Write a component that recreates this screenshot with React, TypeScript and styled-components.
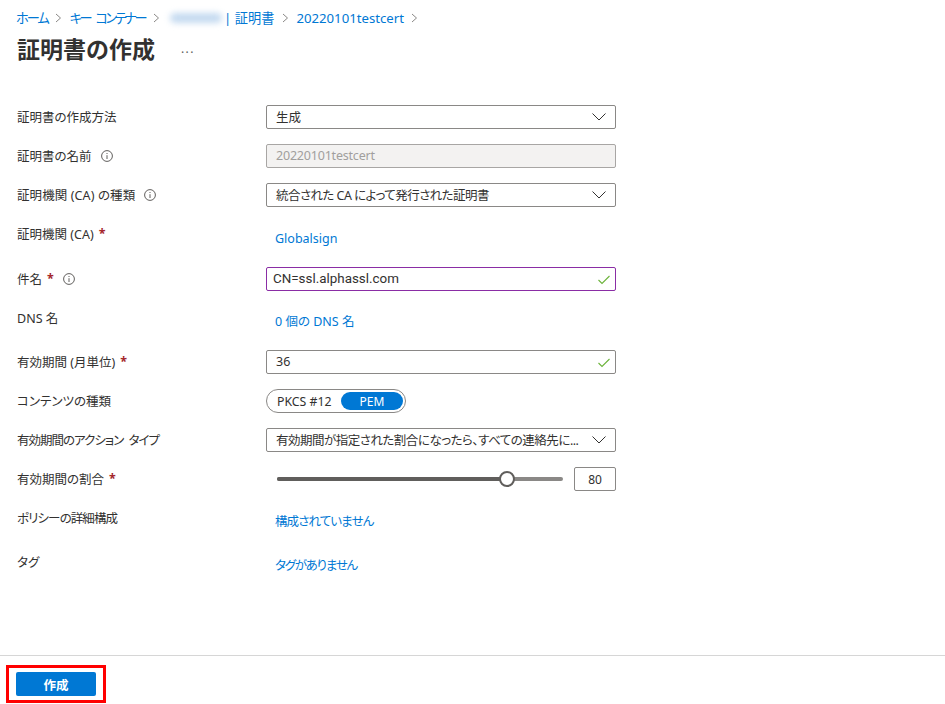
import React from "react";
import styled, { createGlobalStyle } from "styled-components";

const Global = createGlobalStyle`
  html, body { margin: 0; padding: 0; background: #fff; overflow: hidden; }
  body { font-family: "Noto Sans", "Noto Sans CJK JP", sans-serif; color: #323130; font-feature-settings: "palt" 1; }
`;
const JP = `"Noto Sans", "Noto Sans CJK JP", sans-serif`;

const Page = styled.div`
  height: 704px; display: flex; flex-direction: column; font-family: ${JP};
`;
const Header = styled.header`padding: 8px 16px 0 16px;`;
const Breadcrumb = styled.nav`
  display: flex; align-items: center; height: 19px; font-size: 13.2px; color: #0078d4;
`;
const Crumb = styled.a<{ $track?: number }>`
  color: #0078d4; white-space: nowrap; letter-spacing: ${p => p.$track ?? 0}px; word-spacing: ${p => (p.$track ? 4 : 0)}px;
`;
const Sep = styled.span`display: inline-flex; width: 22px; justify-content: center; color: #8a8886;`;
const Blurred = styled.span`
  display: inline-block; width: 52px; height: 10px; margin: 0 2px 0 3px;
  background: #c4daf0; border-radius: 5px; filter: blur(3px);
`;
const TitleRow = styled.div`display: flex; align-items: center; margin-top: 3px; height: 38px;`;
const Title = styled.h1`
  margin: 0; font-size: 23px; font-weight: 700; color: #323130; line-height: 38px; margin-left: 1px;
  font-feature-settings: normal;
`;
const More = styled.span`margin-left: 26px; font-size: 12px; color: #605e5c; letter-spacing: 1.4px; position: relative; top: -1px;`;

const Form = styled.main`
  margin-top: 37px; padding-left: 17px; display: flex; flex-direction: column; gap: 15px;
`;
const Row = styled.div<{ $h?: number }>`
  display: grid; grid-template-columns: 249px 350px; height: ${p => p.$h ?? 24}px;
`;
const Label = styled.label<{ $track?: number; $word?: number }>`
  font-size: 12.5px; color: #323130; display: flex; align-items: center; height: 22px; white-space: pre;
  letter-spacing: ${p => p.$track ?? 0}px; word-spacing: ${p => p.$word ?? 0}px;
`;
const Star = styled.span`color: #a4262c; margin-left: 5px; font-weight: 700;`;
const InfoWrap = styled.span`display: inline-flex; margin-left: 9px; margin-top: 2px; color: #605e5c;`;
const Box = styled.div<{ $disabled?: boolean; $focus?: boolean; $track?: number }>`
  box-sizing: border-box; width: 350px; height: 24px; display: flex; align-items: center;
  justify-content: space-between; padding: 0 8px 1px 9px; border-radius: 2px; font-size: 12.5px;
  color: ${p => (p.$disabled ? "#a19f9d" : "#323130")};
  background: ${p => (p.$disabled ? "#f3f2f1" : "#fff")};
  border: 1px solid ${p => (p.$focus ? "#8a2da5" : p.$disabled ? "#a8a6a4" : "#8a8886")};
  white-space: nowrap;
  letter-spacing: ${p => p.$track ?? 0}px;
`;
const BigText = styled.span`font-family: Roboto, sans-serif; font-size: 13.4px; color: #323130; margin-left: -3px;`;
const LinkCell = styled.a<{ $pt?: number; $track?: number }>`
  font-size: 12.5px; color: #0078d4; padding: ${p => p.$pt ?? 6}px 0 0 9px; line-height: 20px; display: block;
  letter-spacing: ${p => p.$track ?? 0}px;
`;
const Toggle = styled.div`
  box-sizing: border-box; width: 140px; height: 24px; border: 1px solid #8a8886; border-radius: 12px;
  display: flex; align-items: center; padding: 0 2px 0 10px; font-size: 12.3px; justify-content: space-between;
`;
const ToggleOn = styled.span`
  width: 62px; height: 18px; border-radius: 9px; background: #0078d4; color: #fff;
  display: flex; align-items: center; justify-content: center; font-size: 12px;
`;
const SliderRow = styled.div`display: flex; align-items: center; justify-content: space-between; height: 24px;`;
const Track = styled.div`
  position: relative; width: 286px; height: 4px; margin-left: 11px; border-radius: 2px; background: #8a8886;
`;
const Fill = styled.div`height: 4px; border-radius: 2px; background: #605e5c;`;
const Thumb = styled.div`
  position: absolute; top: -6px; width: 16px; height: 16px; box-sizing: border-box; margin-left: -8px;
  border: 2px solid #605e5c; border-radius: 50%; background: #fff;
`;
const NumBox = styled.div`
  box-sizing: border-box; width: 42px; height: 24px; border: 1px solid #8a8886; border-radius: 2px;
  font-size: 12px; display: flex; align-items: center; justify-content: center;
`;
const Footer = styled.footer`
  margin-top: auto; border-top: 1px solid #d6d6d6; padding: 9px 6px 1px;
`;
const Highlight = styled.div`
  display: inline-block; box-sizing: border-box; border: 3px solid #f00; padding: 4px 7px; height: 38px; width: 100px;
`;
const Primary = styled.button`
  display: block; width: 80px; height: 24px; border: 0; border-radius: 2px; padding: 0;
  background: #0078d4; color: #fff; font: 700 12.5px ${JP};
`;

const Chevron = () => (
  <svg width="16" height="10" viewBox="0 0 16 10" fill="none" stroke="#323130" strokeWidth="1" style={{ marginTop: 1 }}>
    <path d="M1.5 1.5 L8 8 L14.5 1.5" />
  </svg>
);
const Check = () => (
  <svg width="14" height="10" viewBox="0 0 14 10" fill="none" stroke="#6bb33a" strokeWidth="1.1" style={{ marginTop: 2, marginRight: -4 }}>
    <path d="M1.5 5 L5 8.5 L12.5 1" />
  </svg>
);
const CrumbSep = () => (
  <Sep>
    <svg width="7" height="10" viewBox="0 0 7 10" fill="none" stroke="#8a8886" strokeWidth="1">
      <path d="M1 1 L5.5 5 L1 9" />
    </svg>
  </Sep>
);
const Info = () => (
  <InfoWrap>
    <svg width="12" height="12" viewBox="0 0 12 12" fill="none" stroke="currentColor" strokeWidth="1">
      <circle cx="6" cy="6" r="5.4" />
      <path d="M6 5.2 V9" />
      <path d="M6 3 V4" />
    </svg>
  </InfoWrap>
);

export default function App() {
  return (
    <Page>
      <Global />
      <Header>
        <Breadcrumb>
          <Crumb $track={-2}>ホーム</Crumb><CrumbSep />
          <Crumb $track={-2.4}>キー コンテナー</Crumb><CrumbSep />
          <Blurred /><Crumb>| 証明書</Crumb><CrumbSep />
          <Crumb>20220101testcert</Crumb><CrumbSep />
        </Breadcrumb>
        <TitleRow>
          <Title>証明書の作成</Title>
          <More>...</More>
        </TitleRow>
      </Header>
      <Form>
        <Row>
          <Label>証明書の作成方法</Label>
          <Box>生成<Chevron /></Box>
        </Row>
        <Row>
          <Label>証明書の名前<Info /></Label>
          <Box $disabled $track={-0.2}>20220101testcert</Box>
        </Row>
        <Row>
          <Label $track={0.1}>証明機関 (CA) の種類<Info /></Label>
          <Box $track={-0.55}>統合された CA によって発行された証明書<Chevron /></Box>
        </Row>
        <Row $h={30}>
          <Label>証明機関 (CA)<Star>*</Star></Label>
          <LinkCell $pt={7}>Globalsign</LinkCell>
        </Row>
        <Row>
          <Label>件名<Star>*</Star><Info /></Label>
          <Box $focus><BigText>CN=ssl.alphassl.com</BigText><Check /></Box>
        </Row>
        <Row $h={29}>
          <Label>DNS 名</Label>
          <LinkCell>0 個の DNS 名</LinkCell>
        </Row>
        <Row>
          <Label>有効期間 (月単位)<Star>*</Star></Label>
          <Box>36<Check /></Box>
        </Row>
        <Row>
          <Label>コンテンツの種類</Label>
          <Toggle>PKCS #12<ToggleOn>PEM</ToggleOn></Toggle>
        </Row>
        <Row>
          <Label $track={-1} $word={3}>有効期間のアクション タイプ</Label>
          <Box $track={-0.5}>有効期間が指定された割合になったら、すべての連絡先に...<Chevron /></Box>
        </Row>
        <Row>
          <Label>有効期間の割合<Star>*</Star></Label>
          <SliderRow>
            <Track>
              <Fill style={{ width: "80.4%" }} />
              <Thumb style={{ left: "80.4%" }} />
            </Track>
            <NumBox>80</NumBox>
          </SliderRow>
        </Row>
        <Row $h={29}>
          <Label $track={-0.9}>ポリシーの詳細構成</Label>
          <LinkCell $track={-0.9}>構成されていません</LinkCell>
        </Row>
        <Row>
          <Label>タグ</Label>
          <LinkCell $track={-1.25}>タグがありません</LinkCell>
        </Row>
      </Form>
      <Footer>
        <Highlight>
          <Primary>作成</Primary>
        </Highlight>
      </Footer>
    </Page>
  );
}
